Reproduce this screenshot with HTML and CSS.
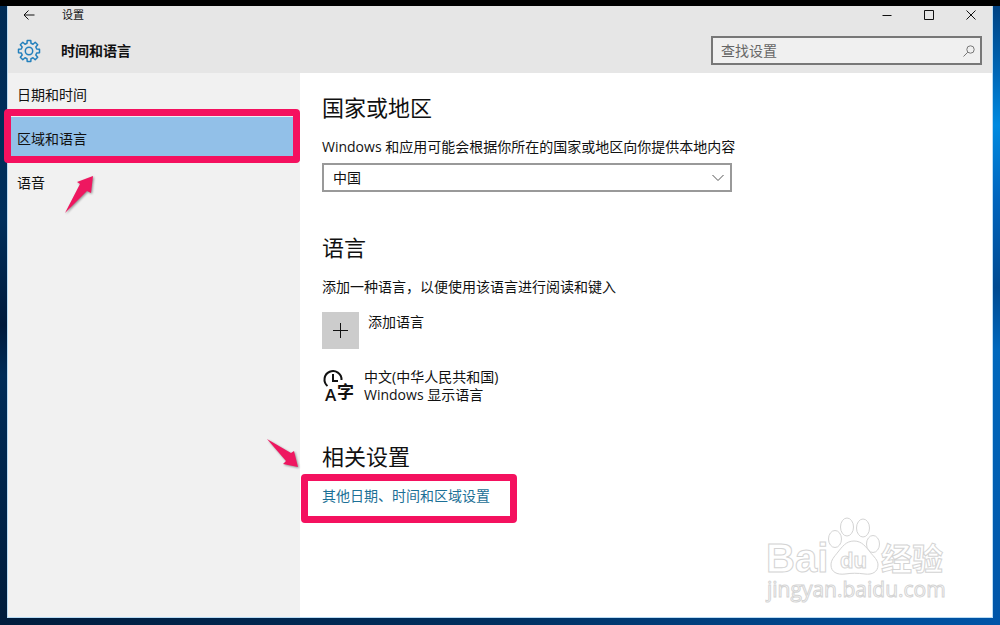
FILE: index.html
```html
<!DOCTYPE html>
<html lang="zh-CN">
<head>
<meta charset="utf-8">
<title>设置</title>
<link rel="stylesheet" href="styles.css">
</head>
<body>
<div class="window">
  <header class="header">
    <div class="titlebar">
      <button class="tool back" type="button" aria-label="返回">
        <svg width="12" height="12" viewBox="0 0 12 12"><path d="M11.5 6H1M5.5 1.5 1 6l4.500 4.500"/></svg>
      </button>
      <span class="caption">设置</span>
      <div class="controls">
        <button class="tool" type="button" aria-label="最小化"><svg width="10" height="10" viewBox="0 0 10 10"><path d="M.5 5.500h9"/></svg></button>
        <button class="tool" type="button" aria-label="最大化"><svg width="10" height="10" viewBox="0 0 10 10"><path d="M.5.500h9v9h-9z"/></svg></button>
        <button class="tool" type="button" aria-label="关闭"><svg width="10" height="10" viewBox="0 0 10 10"><path d="m.5.500 9 9m0-9-9 9"/></svg></button>
      </div>
    </div>
    <div class="heading">
      <svg class="gear" width="24" height="24" viewBox="0 0 24 24"><path d="M10 4.300 10.200 1.500h3.600L14 4.300l2 .9 2.200-1.900 2.500 2.500L18.800 8l.9 2 2.800.2v3.600l-2.800.2-.9 2 1.900 2.200-2.500 2.500L16 18.800l-2 .9-.2 2.800h-3.600L10 19.700l-2-.9-2.200 1.900-2.500-2.500L5.200 16l-.9-2-2.800-.2v-3.600L4.300 10l.9-2-1.900-2.200 2.500-2.500L8 5.200z"/><circle cx="12" cy="12" r="3.700"/></svg>
      <h1 class="title">时间和语言</h1>
      <label class="search">
        <input class="search-input" type="search" placeholder="查找设置" aria-label="查找设置">
        <svg class="search-icon" width="12" height="12" viewBox="0 0 12 12"><circle cx="7.500" cy="4.500" r="3.700"/><path d="M4.800 7.200.5 11.500"/></svg>
      </label>
    </div>
  </header>
  <div class="body">
    <nav class="sidebar">
      <a class="nav-item" href="#date">日期和时间</a>
      <a class="nav-item active marked" href="#region">区域和语言</a>
      <a class="nav-item" href="#speech">语音</a>
      <svg class="arrow arrow-up" width="32" height="40" viewBox="0 0 32 40"><path d="M29 1 27 18l-4-2L1 38 16 9l-3-2z"/></svg>
    </nav>
    <main class="content">
      <section class="section region">
        <h2 class="section-title">国家或地区</h2>
        <label class="text" for="country">Windows 和应用可能会根据你所在的国家或地区向你提供本地内容</label>
        <div class="select-wrap">
          <select class="select" id="country"><option>中国</option></select>
          <svg class="chevron" width="12" height="8" viewBox="0 0 12 8"><path d="m.5 1 5.500 5.500L11.500 1"/></svg>
        </div>
      </section>
      <section class="section language">
        <h2 class="section-title">语言</h2>
        <p class="text">添加一种语言，以便使用该语言进行阅读和键入</p>
        <button class="add" type="button">
          <span class="add-box"><svg width="15" height="15" viewBox="0 0 15 15"><path d="M7.500 0v15M0 7.500h15"/></svg></span>
          <span class="text">添加语言</span>
        </button>
        <button class="lang" type="button">
          <svg class="lang-icon" width="34" height="36" viewBox="0 0 34 36">
            <path d="M5.500 18a8.500 8.500 0 1 1 14-6M11 6v7h5"/>
            <text class="lang-a" x="3" y="33">A</text>
            <text class="lang-zi" x="15" y="30">字</text>
          </svg>
          <span>中文(中华人民共和国)<br>Windows 显示语言</span>
        </button>
      </section>
      <section class="section related">
        <h2 class="section-title">相关设置</h2>
        <a class="link marked" href="#more">其他日期、时间和区域设置</a>
        <svg class="arrow arrow-down" width="36" height="34" viewBox="0 0 36 34"><path d="m2 2 24 14 3-2 4 16-15-3 3-3z"/></svg>
      </section>
      <svg class="watermark" width="184" height="90" viewBox="0 0 184 90">
        <text class="wm-bai" x="1" y="57">Bai</text>
        <ellipse cx="70" cy="24" rx="6.500" ry="8.500"/>
        <ellipse cx="82" cy="12" rx="6.500" ry="9"/>
        <ellipse cx="98" cy="13" rx="6.500" ry="9"/>
        <ellipse cx="108" cy="29" rx="6.500" ry="8.500"/>
        <path d="M89 26c8 0 12 6 16 11 4 5 8 8 8 13 0 7-6 10-13 9-8-1-13-1-20 0-8 1-14-2-14-9 0-5 3-8 7-13 4-5 8-11 16-11z"/>
        <text class="wm-du" x="75" y="53">du</text>
        <text class="wm-cn" x="116" y="55">经验</text>
        <text class="wm-url" x="2" y="82">jingyan.baidu.com</text>
      </svg>
    </main>
  </div>
</div>
</body>
</html>
```

FILE: styles.css
```css
* { box-sizing: border-box; }

body {
  margin: 0;
  min-height: 100vh;
  display: flex;
  padding: 0 7px 7px;
  border-top: 6px solid #000;
  background:
    linear-gradient(#002b55, #002f5c 35%, #001a3c 52%, #002c58 60%, #001c3c) left / 7px 100% no-repeat,
    linear-gradient(#003f7e, #0068b8 12%, #008ae0 20%, #0064bd 32%, #004a91 46%, #0068bd 56%, #0055a8) right / 7px 100% no-repeat,
    linear-gradient(90deg, #001c3c, #003060 50%, #0055a8);
  font: 14px/20px "Open Sans", "Noto Sans CJK SC", sans-serif;
  color: #111;
}

h1, h2, p { margin: 0; }
button, input, select { font: inherit; color: inherit; }
button { border: 0; padding: 0; background: none; text-align: left; }
a { text-decoration: none; color: inherit; }
svg { fill: none; stroke: #111; flex: none; }

.window { flex: 1; display: flex; flex-direction: column; border: 1px solid #b9dcf5; border-width: 0 1px 1px; background: #fff; }

.header { background: #e6e6e6; padding-bottom: 1px; }
.titlebar { display: flex; align-items: center; height: 18px; margin-bottom: 5px; padding-left: 15px; }
.back { width: 12px; }
.tool { display: flex; justify-content: center; align-items: center; height: 18px; }
.caption { margin-left: 27px; font-size: 11px; }
.controls { margin-left: auto; display: flex; }
.controls .tool { width: 42px; }
.heading { display: flex; align-items: center; height: 43px; padding: 0 10px 0 9px; }
.gear { stroke: #2380bd; stroke-width: 1.5; stroke-linejoin: round; }
.title { margin-left: 20px; font-size: 14px; font-weight: 700; }
.search { margin-left: auto; width: 271px; height: 29px; display: flex; align-items: center; padding: 0 5px 0 8px; border: 2px solid #777; background: #f0f0f0; }
.search-input { flex: 1; min-width: 0; border: 0; padding: 0; background: none; outline: 0; }
.search-input::placeholder { color: #666; opacity: 1; }
.search-icon { stroke: #777; }

.body { flex: 1; display: flex; }
.sidebar { position: relative; flex: 0 0 292px; background: #f1f1f1; }
.nav-item { display: flex; align-items: center; height: 44px; padding-left: 9px; }
.active { background: #92c0e8; }

.marked { position: relative; }
.marked::after { content: ""; position: absolute; border: 7px solid #f4115f; border-radius: 4px; }
.nav-item.marked::after { inset: -8px 0 -2px -4px; }
.link.marked::after { inset: -12px -27px -17px -21px; }
.arrow { position: absolute; fill: #ee1760; stroke: none; filter: drop-shadow(1px 1px 1px #0006); }
.arrow-up { left: 56px; top: 102px; }
.arrow-down { left: -57px; top: -4px; }

.content { position: relative; flex: 1; padding: 19px 22px; }
.section { position: relative; display: flex; flex-direction: column; align-items: flex-start; }
.region { margin-bottom: 40px; }
.language { margin-bottom: 37px; }
.section-title { margin-bottom: 15px; font-size: 22px; line-height: 30px; font-weight: 400; }
.text { display: block; }
.select-wrap { position: relative; width: 100%; max-width: 410px; margin-top: 6px; }
.select { display: block; appearance: none; width: 100%; height: 29px; padding: 0 9px; border: 2px solid #999; border-radius: 0; background: #fff; }
.chevron { position: absolute; right: 8px; top: 11px; stroke: #555; pointer-events: none; }

.add { display: flex; align-items: flex-start; gap: 9px; margin-top: 15px; }
.add-box { display: flex; align-items: center; justify-content: center; width: 37px; height: 37px; background: #ccc; }
.lang { display: flex; align-items: center; gap: 8px; margin-top: 19px; line-height: 18px; }
.lang-icon { stroke-width: 2; }
.lang-icon text { fill: #111; stroke: none; font-size: 17px; font-weight: 600; }
.link { color: #1c7096; }

.watermark { position: absolute; right: 43px; bottom: 12px; fill: #fff; stroke: #d4d4d4; pointer-events: none; }
.watermark text { font-family: "Liberation Sans", "Noto Sans CJK SC", sans-serif; font-weight: 700; }
.wm-bai { font-size: 40px; }
.wm-du { font-size: 22px; }
.watermark .wm-cn { font-family: "Noto Sans CJK SC", sans-serif; font-size: 31px; }
.watermark .wm-url { font-family: "Open Sans", sans-serif; font-size: 21px; font-weight: 400; }
```
